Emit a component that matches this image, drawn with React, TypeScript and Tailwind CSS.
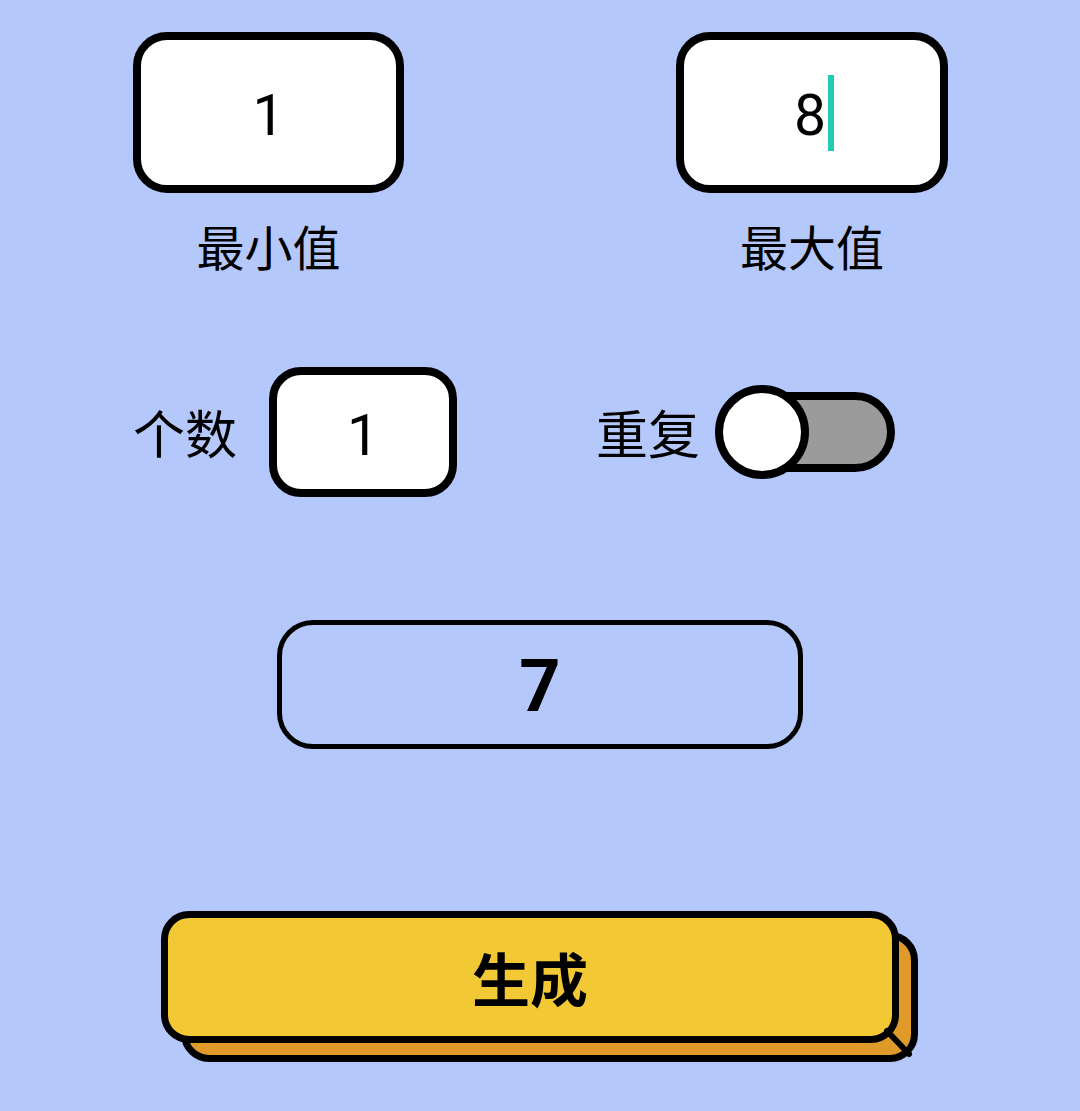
export default function App() {
  return (
    <div className="min-h-[1111px] w-[1080px] overflow-hidden bg-[#b5c8fc] pt-[32px] font-['Roboto','Noto_Sans_CJK_SC',sans-serif] text-black">
      {/* Row 1: min / max */}
      <div className="flex gap-[272px] pl-[133px]">
        <div className="flex w-[271px] flex-col items-center">
          <div className="flex h-[161px] w-full items-center justify-center rounded-[34px] border-[8px] border-black bg-white pt-[6px] text-[57px] leading-none">
            1
          </div>
          <div className="mt-[28px] font-['Noto_Sans_CJK_SC',sans-serif] text-[48px] leading-none">最小值</div>
        </div>
        <div className="flex w-[272px] flex-col items-center">
          <div className="flex h-[161px] w-full items-center justify-center rounded-[34px] border-[8px] border-black bg-white text-[57px] leading-none">
            <span className="ml-[4px] pt-[6px]">8</span>
            <span className="ml-[2px] h-[76px] w-[6px] bg-[#22ccb4]" />
          </div>
          <div className="mt-[28px] font-['Noto_Sans_CJK_SC',sans-serif] text-[48px] leading-none">最大值</div>
        </div>
      </div>

      {/* Row 2: count / repeat */}
      <div className="mt-[98px] flex h-[130px] items-center pl-[133px]">
        <div className="font-['Noto_Sans_CJK_SC',sans-serif] text-[52px] leading-none">个数</div>
        <div className="ml-[32px] flex h-[130px] w-[188px] items-center justify-center rounded-[32px] border-[8px] border-black bg-white pt-[6px] text-[57px] leading-none">
          1
        </div>
        <div className="ml-[139px] font-['Noto_Sans_CJK_SC',sans-serif] text-[52px] leading-none">重复</div>
        <div className="relative ml-[17px] flex h-[94px] w-[178px] items-center">
          <div className="ml-[2px] h-[80px] w-[176px] rounded-full border-[8px] border-black bg-[#9b9b9b]" />
          <div className="absolute left-[-2px] top-0 h-[94px] w-[94px] rounded-full border-[8px] border-black bg-white" />
        </div>
      </div>

      {/* Result */}
      <div className="ml-[277px] mt-[123px] flex h-[129px] w-[526px] items-center justify-center rounded-[36px] border-[5px] border-black pt-[4px] text-[72px] font-bold leading-none">
        7
      </div>

      {/* Generate button */}
      <div className="relative ml-[161px] mt-[162px] h-[151px] w-[757px]">
        <div className="absolute left-[20px] top-[21px] h-[130px] w-[737px] rounded-[28px] border-[7px] border-black bg-[#e09a2a]" />
        <div className="relative flex h-[132px] w-[738px] items-center justify-center rounded-[28px] border-[7px] border-black bg-[#f2c935] font-['Noto_Sans_CJK_SC',sans-serif] text-[58px] font-bold leading-none">
          生成
        </div>
        <svg className="absolute left-[726px] top-[120px] overflow-visible" width="1" height="1">
          <line x1="0" y1="0" x2="22" y2="23" stroke="black" strokeWidth="6" strokeLinecap="round" />
        </svg>
      </div>
    </div>
  );
}
